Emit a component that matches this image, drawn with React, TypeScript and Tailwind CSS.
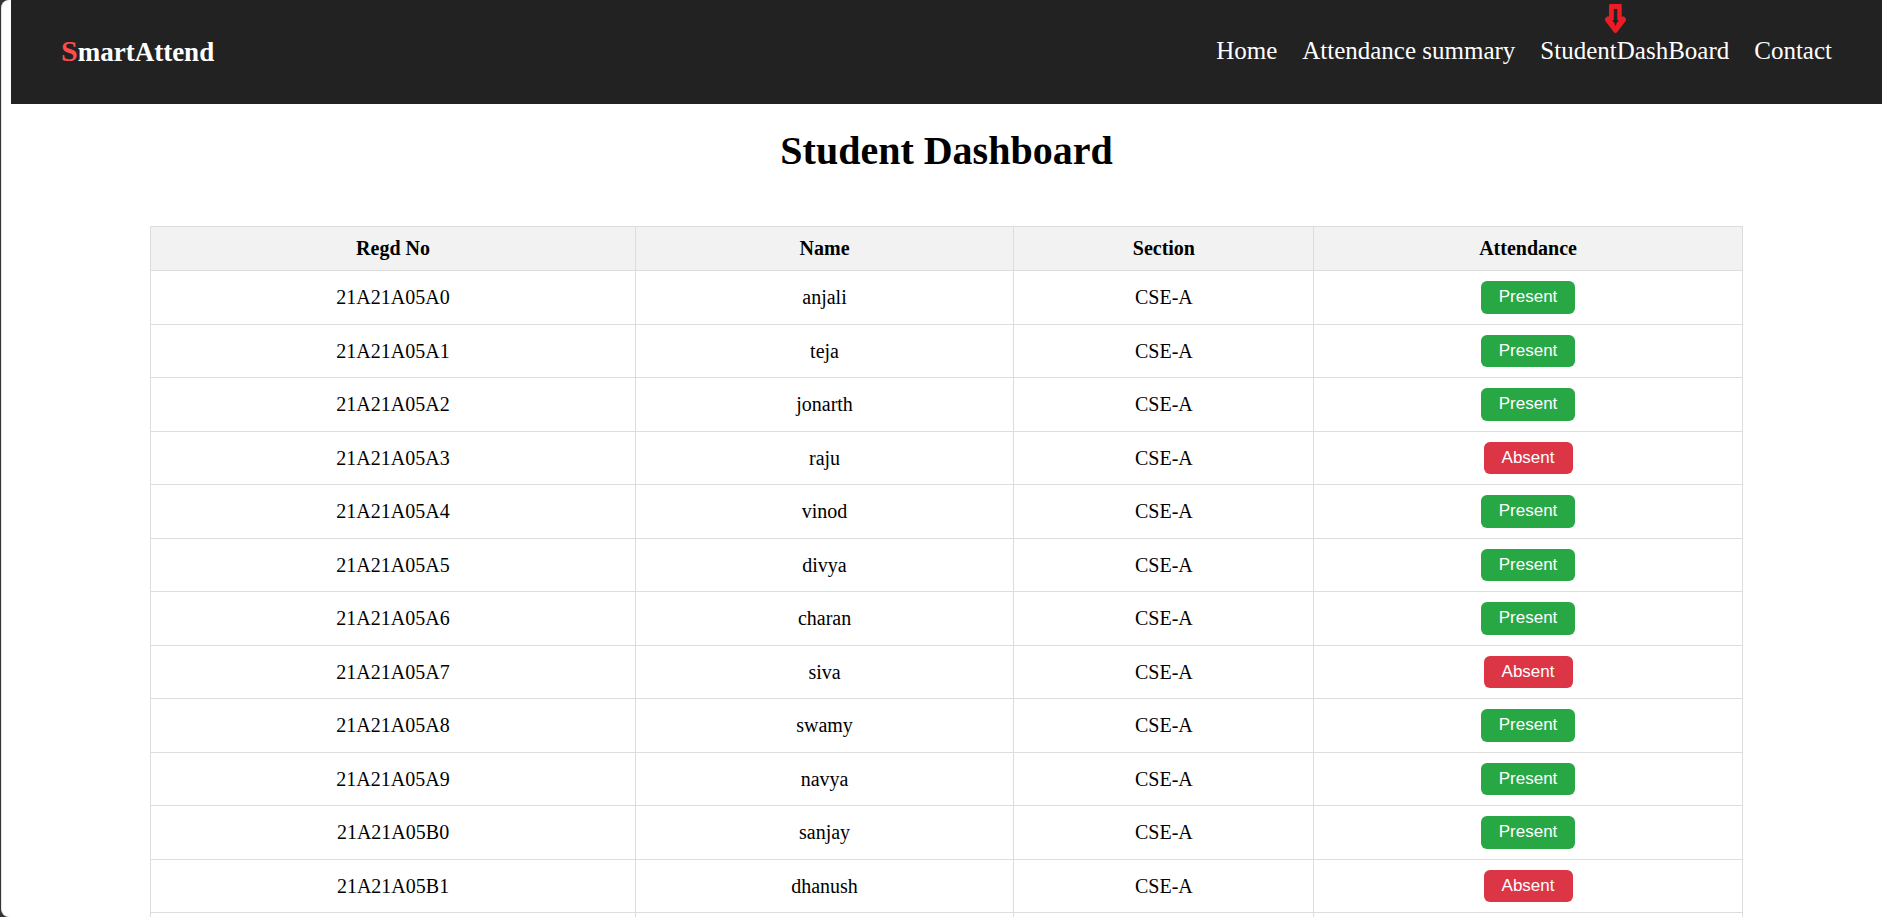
type Status = "Present" | "Absent";

interface Student {
  regdNo: string;
  name: string;
  section: string;
  status: Status;
}

const students: Student[] = [
  { regdNo: "21A21A05A0", name: "anjali", section: "CSE-A", status: "Present" },
  { regdNo: "21A21A05A1", name: "teja", section: "CSE-A", status: "Present" },
  { regdNo: "21A21A05A2", name: "jonarth", section: "CSE-A", status: "Present" },
  { regdNo: "21A21A05A3", name: "raju", section: "CSE-A", status: "Absent" },
  { regdNo: "21A21A05A4", name: "vinod", section: "CSE-A", status: "Present" },
  { regdNo: "21A21A05A5", name: "divya", section: "CSE-A", status: "Present" },
  { regdNo: "21A21A05A6", name: "charan", section: "CSE-A", status: "Present" },
  { regdNo: "21A21A05A7", name: "siva", section: "CSE-A", status: "Absent" },
  { regdNo: "21A21A05A8", name: "swamy", section: "CSE-A", status: "Present" },
  { regdNo: "21A21A05A9", name: "navya", section: "CSE-A", status: "Present" },
  { regdNo: "21A21A05B0", name: "sanjay", section: "CSE-A", status: "Present" },
  { regdNo: "21A21A05B1", name: "dhanush", section: "CSE-A", status: "Absent" },
];

const links = ["Home", "Attendance summary", "StudentDashBoard", "Contact"];

const statusColor: Record<Status, string> = {
  Present: "bg-[#28a745]",
  Absent: "bg-[#dc3545]",
};

const cell = "border border-[#dddddd] p-[10px]";

function DownArrow() {
  return (
    <svg
      className="absolute bottom-full left-[65px] mb-[3px] h-[30px] w-[21px]"
      viewBox="0 0 21 30"
      aria-hidden="true"
    >
      <path
        fillRule="evenodd"
        fill="#ed1c24"
        d="M4.5 0.5L5 0H16L16.7 0.7V12.5H19L21 14.5V16.5L11.8 28.5L10.5 29.2L9.2 28.5L0 16.5V14.5L2 12.5H4V1zM8.8 5V16H7.8V18H8.8L9.8 20V21.5H11.2V20L12.3 18H13.3V16H12.3V5z"
      />
    </svg>
  );
}

function Header() {
  return (
    <header className="flex h-[104px] items-center justify-between bg-[#222222] px-[50px] pb-[2px] text-white">
      <a href="#" className="text-[27px] leading-[32px] font-bold">
        <span className="text-[30px] text-[#ff4d4d]">S</span>martAttend
      </a>
      <nav className="flex gap-[25px] text-[25px] leading-[28px]">
        {links.map((label) => (
          <a key={label} href="#" className="relative">
            {label}
            {label === "StudentDashBoard" && <DownArrow />}
          </a>
        ))}
      </nav>
    </header>
  );
}

function AttendanceTable() {
  return (
    <table className="mx-auto w-[calc(85%+2px)] border-collapse text-center text-[20px] leading-[23px]">
      <thead>
        <tr className="bg-[#f2f2f2]">
          <th className={cell}>Regd No</th>
          <th className={`${cell} min-w-[105px]`}>Name</th>
          <th className={cell}>Section</th>
          <th className={cell}>Attendance</th>
        </tr>
      </thead>
      <tbody>
        {students.map((s) => (
          <tr key={s.regdNo} className="group">
            <td className={cell}>{s.regdNo}</td>
            <td className={cell}>{s.name}</td>
            <td className={cell}>{s.section}</td>
            <td className={cell}>
              <button
                type="button"
                className={`mx-auto block h-[32px] rounded-[6px] px-[18px] pb-[1px] font-['Liberation_Sans',Arial,sans-serif] text-[17px] leading-[20px] text-white group-odd:h-[33px] group-odd:pb-[2px] ${statusColor[s.status]}`}
              >
                {s.status}
              </button>
            </td>
          </tr>
        ))}
        <tr aria-hidden="true">
          <td className={cell} />
          <td className={cell} />
          <td className={cell} />
          <td className={cell} />
        </tr>
      </tbody>
    </table>
  );
}

export default function App() {
  return (
    <div className="h-screen overflow-hidden bg-[#333338] pl-px font-['Liberation_Serif','Times_New_Roman',serif] text-black">
      <div className="h-full overflow-hidden rounded-l-[8px] border-l border-[#e5e5e5] bg-white pr-[9px] pl-[9px]">
        <Header />
        <main>
          <h1 className="mt-[24px] mb-[52px] text-center text-[40px] leading-[46px] font-bold">
            Student Dashboard
          </h1>
          <AttendanceTable />
        </main>
      </div>
    </div>
  );
}
